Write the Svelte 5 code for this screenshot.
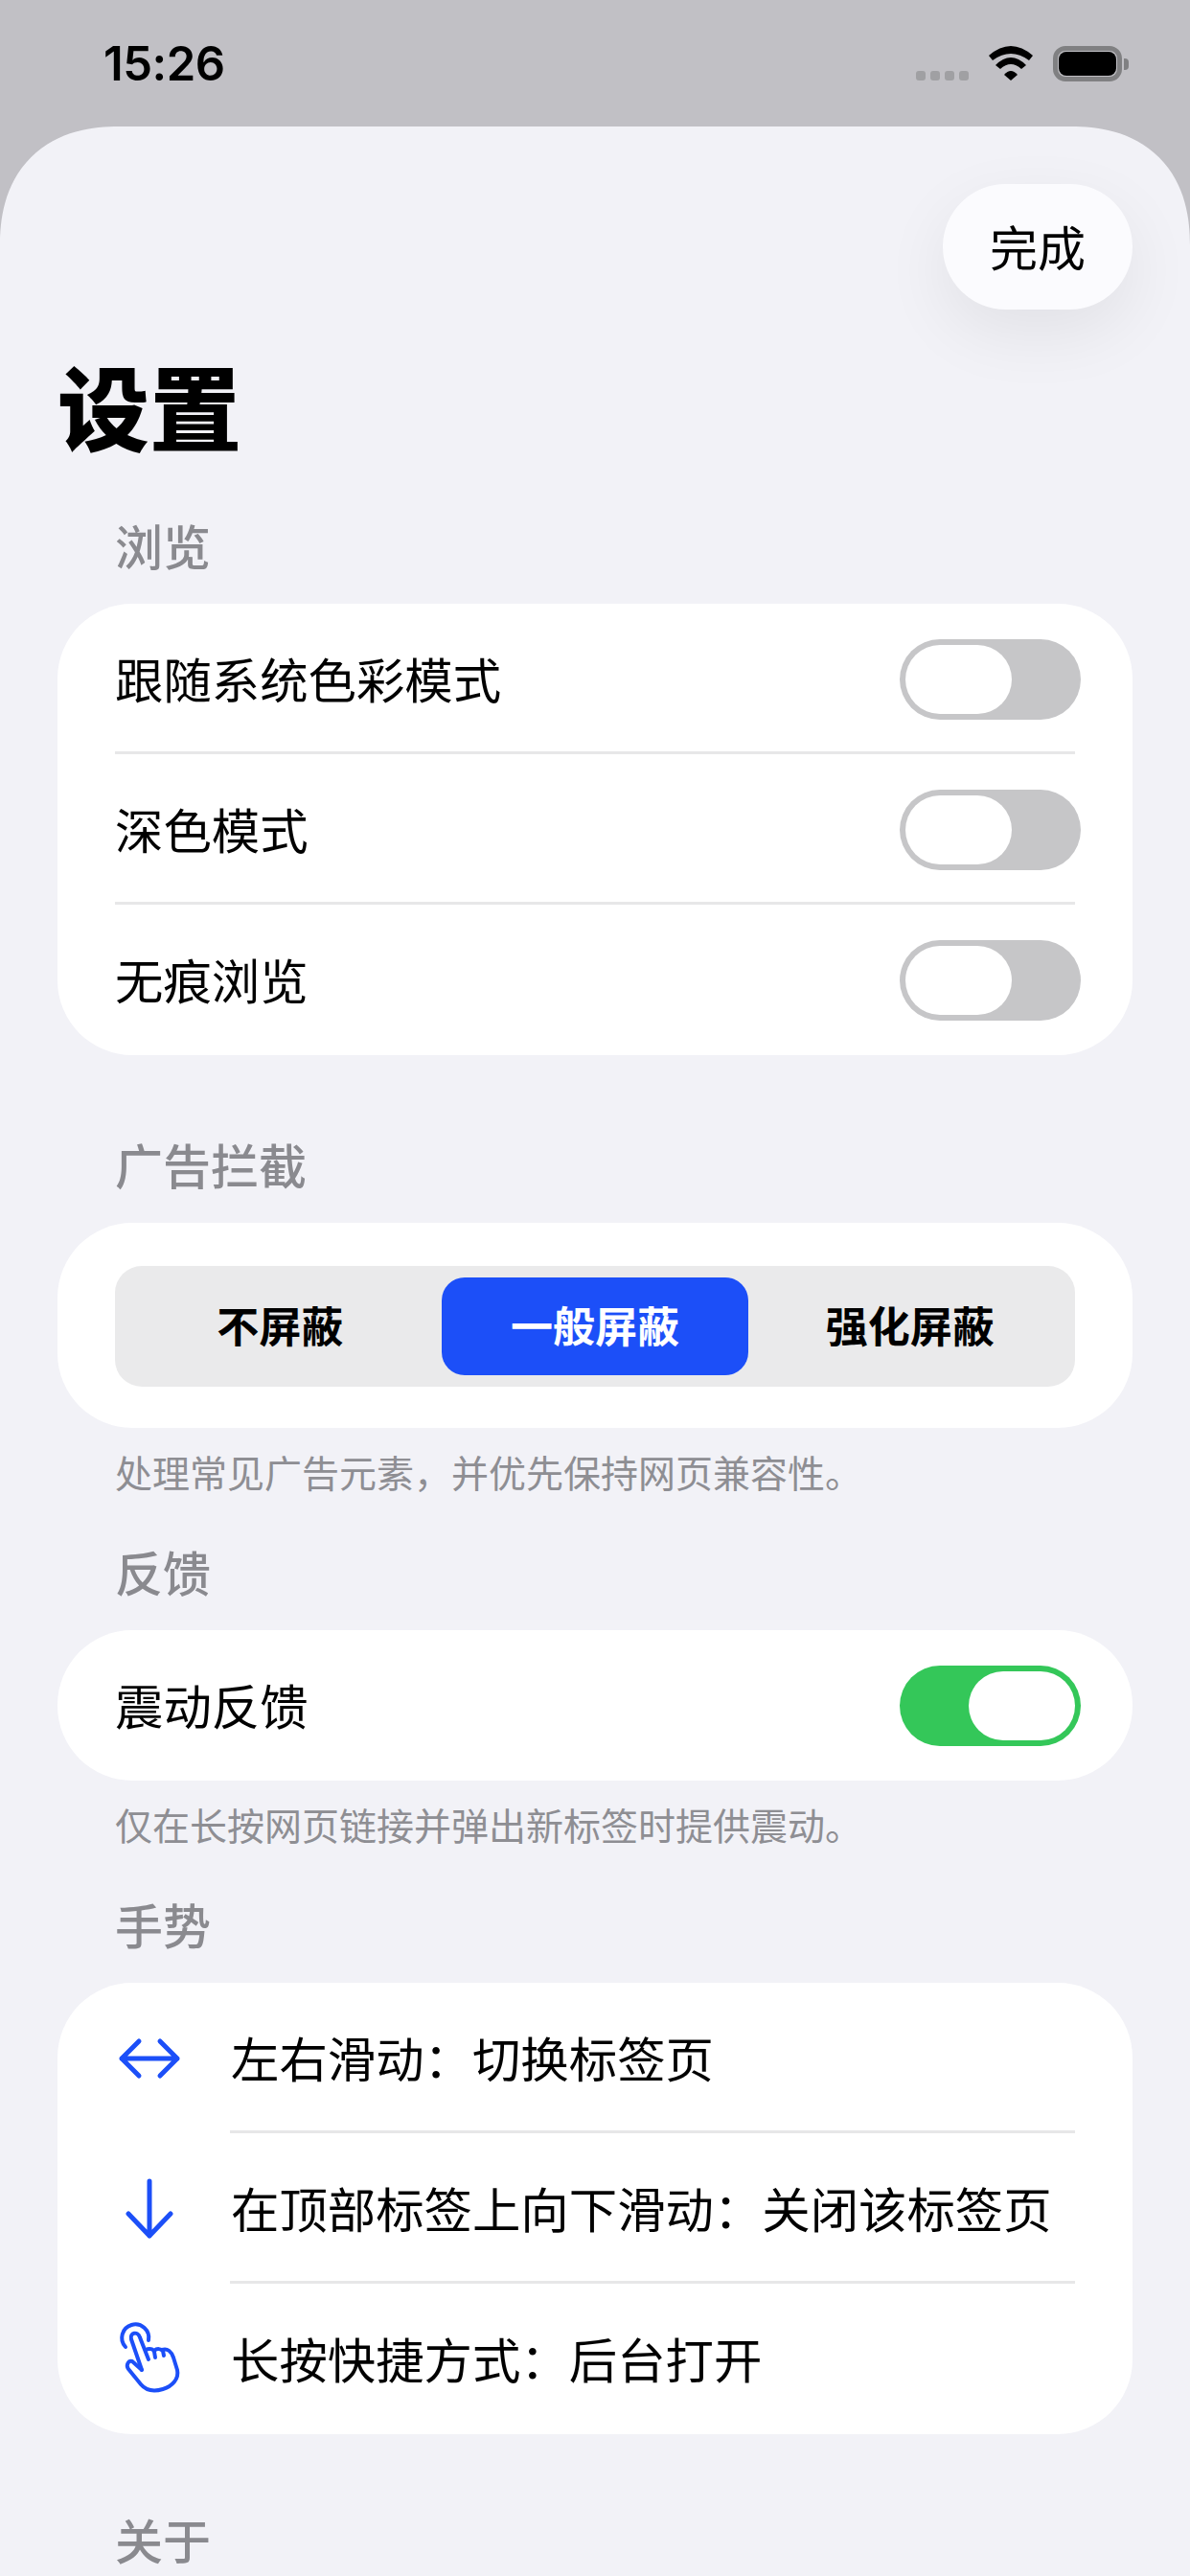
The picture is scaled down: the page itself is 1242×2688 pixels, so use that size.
<script lang="ts">
	// Content
	const browsing = [
		{ label: '跟随系统色彩模式', on: false },
		{ label: '深色模式', on: false },
		{ label: '无痕浏览', on: false }
	]
	const blockModes = ['不屏蔽', '一般屏蔽', '强化屏蔽']
	const activeMode = '一般屏蔽'
	const gestures = [
		{ icon: 'swipe', label: '左右滑动：切换标签页' },
		{ icon: 'down', label: '在顶部标签上向下滑动：关闭该标签页' },
		{ icon: 'hand', label: '长按快捷方式：后台打开' }
	]
</script>


{#snippet toggle(on: boolean)}
	<span class="toggle" class:on>
		<span class="thumb"></span>
	</span>
{/snippet}


<div class="page">
	<header class="status">
		<span class="time">15:26</span>
		<span class="status-icons">
			<span class="dots"><i></i><i></i><i></i><i></i></span>
			<svg width="48" height="36" viewBox="0 0 48 36" fill="#000">
				<path d="M1 10Q24-10 47 10L43 15Q24 1 5 15Z" />
				<path d="M8 20Q24 4 40 20L35 24Q24 14 13 24Z" />
				<path d="M17 30Q24 22 31 30L24 36Z" />
			</svg>
			<span class="battery"><span class="level"></span><span class="nub"></span></span>
		</span>
	</header>

	<main class="sheet">
		<button class="done">完成</button>

		<h1>设置</h1>

		<section class="browsing">
			<h2>浏览</h2>
			<div class="card">
				{#each browsing as row, i}
					{#if i > 0}<div class="sep"></div>{/if}
					<div class="row">
						<span class="label">{row.label}</span>
						{@render toggle(row.on)}
					</div>
				{/each}
			</div>
		</section>

		<section class="with-note">
			<h2>广告拦截</h2>
			<div class="card seg-card">
				<div class="seg">
					{#each blockModes as mode}
						<span class="seg-item" class:active={mode === activeMode}>{mode}</span>
					{/each}
				</div>
			</div>
			<p class="note">处理常见广告元素，并优先保持网页兼容性。</p>
		</section>

		<section class="with-note">
			<h2>反馈</h2>
			<div class="card">
				<div class="row">
					<span class="label">震动反馈</span>
					{@render toggle(true)}
				</div>
			</div>
			<p class="note">仅在长按网页链接并弹出新标签时提供震动。</p>
		</section>

		<section>
			<h2>手势</h2>
			<div class="card">
				{#each gestures as row, i}
					{#if i > 0}<div class="sep inset"></div>{/if}
					<div class="row gesture">
						<svg class="icon" width="120" height="100" viewBox="0 0 120 100" fill="none" stroke="#1c4ff8" stroke-width="5" stroke-linecap="round" stroke-linejoin="round">
							{#if row.icon === 'swipe'}
								<path d="M27 50H85M45 32L27 50L45 68M67 32L85 50L67 68" />
							{:else if row.icon === 'down'}
								<path d="M56 21V78M34 55L56 78L78 55" />
							{:else}
								<g stroke-width="4" transform="translate(0 -2)">
									<path d="M31 39A14 14 0 1 1 55 32" />
									<path d="M48 63L37 31C35 24 44 22 46 29L55 52" />
									<path d="M52 42C56 40 60 41 61 44L62 50" />
									<path d="M61 43C64 40 68 41 70 43L71 48" />
									<path d="M69 42C75 40 79 44 81 50L85 63C87 72 80 80 70 83C60 86 52 84 47 78L34 62C31 58 34 53 38 54L48 63" />
								</g>
							{/if}
						</svg>
						<span class="label">{row.label}</span>
					</div>
				{/each}
			</div>
		</section>

		<section class="about">
			<h2>关于</h2>
		</section>
	</main>
</div>


<style>
	:global(body) {
		background: #c1c0c5;
	}

	.page {
		height: 2688px;
		overflow: hidden;
		font-family: Inter, 'Noto Sans CJK SC', sans-serif;
		color: #000;
		background: #c1c0c5;
	}

	.status {
		height: 132px;
		display: flex;
		align-items: center;
		justify-content: space-between;
		padding: 0 71px 0 108px;
		box-sizing: border-box;
	}

	.time {
		font-size: 49px;
		font-weight: 600;
		letter-spacing: -0.5px;
	}

	.status-icons {
		display: flex;
		align-items: center;
		gap: 20px;
	}

	.dots {
		display: flex;
		gap: 5px;
		margin-top: 26px;
	}

	.dots i {
		width: 10px;
		height: 10px;
		border-radius: 3px;
		background: #a0a0a3;
	}

	.battery {
		position: relative;
		width: 72px;
		height: 37px;
		box-sizing: border-box;
		border: 5px solid #808082;
		border-radius: 13px;
		padding: 1px;
	}

	.level {
		display: block;
		height: 100%;
		background: #000;
		border-radius: 8px;
	}

	.nub {
		position: absolute;
		right: -12px;
		top: 8px;
		width: 5px;
		height: 12px;
		background: #808082;
		border-radius: 0 4px 4px 0;
	}

	.sheet {
		position: relative;
		min-height: 2556px;
		box-sizing: border-box;
		padding: 238px 60px 0;
		background: #f2f2f7;
		border-radius: 124px 124px 0 0;
		corner-shape: superellipse(1.2);
	}

	.done {
		position: absolute;
		top: 60px;
		right: 60px;
		width: 198px;
		height: 131px;
		padding: 0 0 3px;
		border: none;
		border-radius: 66px;
		background: #fbfbfe;
		box-shadow: 0 24px 70px rgba(0, 0, 0, 0.07);
		font: inherit;
		font-size: 50px;
		color: #000;
	}

	h1 {
		margin: 0 0 54px;
		font-size: 96px;
		line-height: 116px;
		font-weight: 900;
	}

	section {
		margin-bottom: 84px;
	}

	section.browsing {
		margin-bottom: 85px;
	}

	section.with-note {
		margin-bottom: 48px;
	}

	section.about {
		margin-top: -3px;
	}

	h2 {
		margin: 0 0 28px 60px;
		padding-top: 2px;
		font-size: 50px;
		line-height: 60px;
		font-weight: 500;
		color: #8a8a8f;
	}

	.card {
		background: #fff;
		border-radius: 78px;
		padding-bottom: 3px;
	}

	.row {
		height: 154px;
		box-sizing: border-box;
		display: flex;
		align-items: center;
		justify-content: space-between;
		padding: 4px 54px 0 60px;
		font-size: 50.4px;
	}

	.label {
		padding-bottom: 3px;
	}

	.row.gesture {
		justify-content: flex-start;
		gap: 21px;
		padding-left: 40px;
	}

	.sep {
		height: 3px;
		margin: 0 60px;
		background: #e7e7e8;
	}

	.sep.inset {
		margin-left: 180px;
	}

	.icon {
		flex-shrink: 0;
	}

	.toggle {
		width: 189px;
		height: 84px;
		box-sizing: border-box;
		padding: 6px;
		display: flex;
		border-radius: 42px;
		background: #c6c6c8;
	}

	.toggle.on {
		justify-content: flex-end;
		background: #34c759;
	}

	.thumb {
		width: 111px;
		height: 72px;
		border-radius: 36px;
		background: #fff;
	}

	.seg-card {
		padding: 45px 60px 43px;
	}

	.seg {
		display: grid;
		grid-template-columns: repeat(3, 1fr);
		gap: 8px;
		height: 126px;
		box-sizing: border-box;
		padding: 12px;
		border-radius: 28px;
		background: #eaeaeb;
	}

	.seg-item {
		display: flex;
		align-items: center;
		justify-content: center;
		padding-bottom: 5px;
		border-radius: 24px;
		font-size: 44px;
		font-weight: 600;
	}

	.seg-item.active {
		background: #1c4ff8;
		color: #fff;
	}

	.note {
		margin: 23px 0 0 60px;
		font-size: 39px;
		line-height: 50px;
		color: #8e8e93;
	}
</style>
